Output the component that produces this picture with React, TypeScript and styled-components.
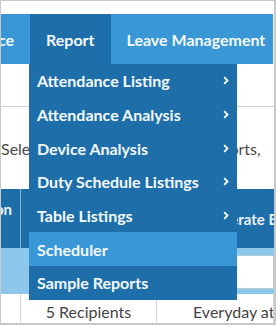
import styled, { createGlobalStyle } from "styled-components";

const GlobalStyle = createGlobalStyle`
  * { box-sizing: border-box; }
  body {
    margin: 0;
    font-family: Lato, "Liberation Sans", sans-serif;
  }
`;

const MENU = [
  { label: "Attendance Listing", sub: true },
  { label: "Attendance Analysis", sub: true },
  { label: "Device Analysis", sub: true },
  { label: "Duty Schedule Listings", sub: true },
  { label: "Table Listings", sub: true },
  { label: "Scheduler", active: true },
  { label: "Sample Reports" },
];

const Chevron = () => (
  <svg width="6" height="9" viewBox="0 0 6 9">
    <path d="M1.2 1.2 L4.5 4.5 L1.2 7.8" fill="none" stroke="#fff" strokeWidth="1.8" />
  </svg>
);

const App = () => {
  return (
    <>
      <GlobalStyle />
      <S.Frame>
        <S.TopGap />
        <S.NavBar>
          <S.NavItem $clipped>Attendance</S.NavItem>
          <S.NavItem $active>
            Report
            <S.Dropdown>
              {MENU.map((m) => (
                <S.MenuItem key={m.label} $active={m.active}>
                  {m.label}
                  {m.sub && <Chevron />}
                </S.MenuItem>
              ))}
            </S.Dropdown>
          </S.NavItem>
          <S.NavItem>Leave Management</S.NavItem>
        </S.NavBar>
        <S.Intro>
          <S.Notice>Select a row to edit it, or add reports,</S.Notice>
        </S.Intro>
        <S.Table>
          <S.HeadCell $first>Action</S.HeadCell>
          <S.HeadCell $center>Recipients</S.HeadCell>
          <S.HeadCell $pad={46}>Generate Every</S.HeadCell>
          <S.FilterCell />
          <S.FilterCell />
          <S.FilterCell>
            <S.FilterInput />
          </S.FilterCell>
          <S.BodyCell $first />
          <S.BodyCell $center>5 Recipients</S.BodyCell>
          <S.BodyCell $pad={36}>Everyday at 08:00</S.BodyCell>
        </S.Table>
      </S.Frame>
    </>
  );
};
export default App;

const Frame = styled.div`
  width: 276px;
  height: 325px;
  border-style: solid;
  border-color: #c8c8c8;
  border-width: 1px 2px 2px 1px;
  background: #fff;
  overflow: hidden;
  position: relative;
`;

const TopGap = styled.div`
  height: 13px;
`;

const NavBar = styled.div`
  height: 50px;
  margin-right: 1px;
  background: #3997d5;
  display: flex;
  position: relative;
  z-index: 2;
`;

type NavProps = { $active?: boolean; $clipped?: boolean };

const NavItem = styled.div<NavProps>`
  position: relative;
  flex-shrink: 0;
  display: flex;
  align-items: center;
  padding: 0 16px;
  white-space: nowrap;
  color: #f4f9fd;
  font-size: 16px;
  font-weight: 700;
  background: ${({ $active }) => ($active ? "#1e6ea9" : "transparent")};
  ${({ $clipped }) =>
    $clipped &&
    `
    width: 29px;
    padding-left: 0;
    justify-content: flex-end;
    overflow: hidden;
  `}
`;

const Dropdown = styled.div`
  position: absolute;
  top: 100%;
  left: -1px;
  width: 208px;
  background: #1e6fa9;
`;

const MenuItem = styled.div<{ $active?: boolean }>`
  height: 33.7px;
  display: flex;
  align-items: center;
  justify-content: space-between;
  padding: 0 8px 0 8px;
  color: #f4f9fd;
  font-size: 16px;
  font-weight: 700;
  background: ${({ $active }) => ($active ? "#3a97d6" : "transparent")};
`;

const Intro = styled.div`
  padding-top: 42px;
`;

const Notice = styled.div`
  height: 83px;
  border-top: 1px solid #cfcfcf;
  display: flex;
  align-items: center;
  white-space: nowrap;
  overflow: hidden;
  color: #4a4a4a;
  font-size: 16px;
`;

const Table = styled.div`
  display: grid;
  grid-template-columns: 20px 136px 1fr;
  grid-template-rows: 59px 46px 34px;
`;

type CellProps = { $first?: boolean; $center?: boolean; $pad?: number };

const HeadCell = styled.div<CellProps>`
  background: #1e6fa9;
  color: #e9f2f9;
  font-size: 15px;
  font-weight: 700;
  white-space: nowrap;
  overflow: hidden;
  display: flex;
  align-items: ${({ $first }) => ($first ? "flex-start" : "center")};
  justify-content: ${({ $first, $center }) =>
    $first ? "flex-end" : $center ? "center" : "flex-start"};
  padding: ${({ $first, $pad }) => ($first ? "11px 8px 0 0" : `0 0 0 ${$pad ?? 0}px`)};
  border-right: ${({ $first }) => ($first ? "1px solid #8fb2cc" : "none")};
`;

const FilterCell = styled.div`
  background: #8dc7ec;
  padding: 7px 0 5px 6px;
`;

const FilterInput = styled.div`
  height: 34px;
  background: #fff;
  border: 1px solid #b9cbd8;
`;

const BodyCell = styled.div<CellProps>`
  display: flex;
  align-items: center;
  justify-content: ${({ $center }) => ($center ? "center" : "flex-start")};
  padding-left: ${({ $pad }) => $pad ?? 0}px;
  white-space: nowrap;
  overflow: hidden;
  color: #444;
  font-size: 16px;
  border-right: 1px solid #d6d6d6;
`;

const S = {
  Frame,
  TopGap,
  NavBar,
  NavItem,
  Dropdown,
  MenuItem,
  Intro,
  Notice,
  Table,
  HeadCell,
  FilterCell,
  FilterInput,
  BodyCell,
};
